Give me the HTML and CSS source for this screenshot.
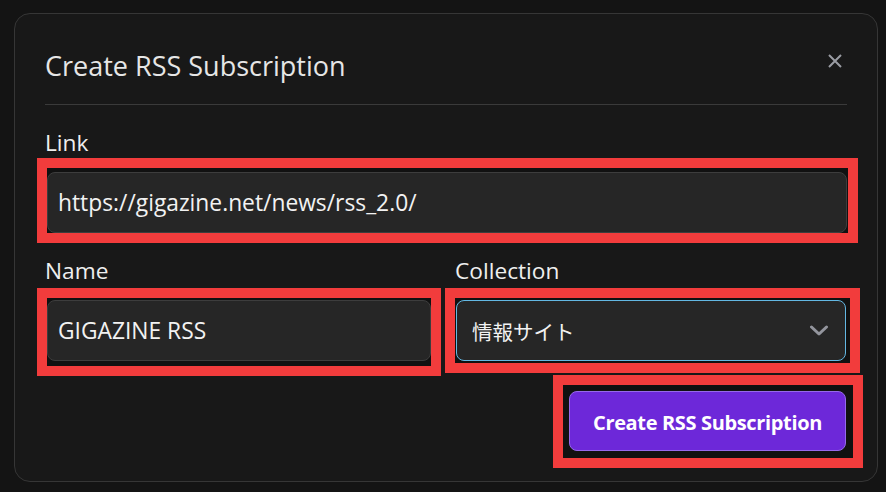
FILE: index.html
```html
<!DOCTYPE html>
<html lang="en">
<head>
<meta charset="utf-8">
<title>Create RSS Subscription</title>
<link rel="stylesheet" href="styles.css">
</head>
<body>
<div class="dialog">
  <div class="header">
    <h1 class="title">Create RSS Subscription</h1>
    <button class="close" aria-label="Close">
      <svg width="16" height="16" viewBox="0 0 16 16"><path d="M2 2 L14 14 M14 2 L2 14" stroke="#9a9ca3" stroke-width="2" fill="none"/></svg>
    </button>
  </div>

  <div class="field">
    <label class="label">Link</label>
    <div class="mark mark-link">
      <div class="input">https://gigazine.net/news/rss_2.0/</div>
    </div>
  </div>

  <div class="row">
    <div class="field">
      <label class="label">Name</label>
      <div class="mark mark-name">
        <div class="input">GIGAZINE RSS</div>
      </div>
    </div>
    <div class="field">
      <label class="label">Collection</label>
      <div class="mark mark-coll">
        <div class="input select">
          <span>情報サイト</span>
          <svg width="20" height="12" viewBox="0 0 20 12"><path d="M2.5 2 L10 9 L17.5 2" stroke="#93959d" stroke-width="3" fill="none" stroke-linecap="round" stroke-linejoin="round"/></svg>
        </div>
      </div>
    </div>
  </div>

  <div class="actions">
    <div class="mark mark-btn">
      <button class="primary">Create RSS Subscription</button>
    </div>
  </div>
</div>
</body>
</html>
```

FILE: styles.css
```css
* { box-sizing: border-box; }
html, body { margin: 0; padding: 0; }
body {
  background: #141414;
  width: 886px;
  height: 492px;
  overflow: hidden;
  font-family: "Open Sans", "Noto Sans", "Noto Sans CJK JP", sans-serif;
  color: #ededed;
}
.dialog {
  margin: 13px 0 0 14px;
  width: 864px;
  height: 469px;
  background: #181818;
  border: 1px solid #363636;
  border-radius: 16px;
  padding: 0 30px;
}
.header {
  height: 91px;
  border-bottom: 1px solid #3a3a3a;
  display: flex;
  align-items: center;
  justify-content: space-between;
  padding-top: 12px;
}
.title {
  margin: 0;
  font-size: 27px;
  font-weight: 400;
  color: #e6e6e6;
}
.close {
  background: none;
  border: 0;
  padding: 0;
  margin-right: 4px;
  margin-top: -8px;
  width: 16px;
  height: 16px;
  display: flex;
}
.field { display: flex; flex-direction: column; }
.label {
  font-size: 22.7px;
  line-height: 24px;
  color: #efefef;
  margin-bottom: 3px;
}
.dialog > .field { margin-top: 26px; }
.mark {
  border: 10px solid #f23c3c;
  background: #111111;
}
.mark-link {
  width: 821px;
  margin-left: -8px;
  padding: 4px 1px 0 0;
}
.input {
  height: 61px;
  background: #262626;
  border: 1px solid #3d3d3d;
  border-radius: 8px;
  padding: 0 10px;
  display: flex;
  align-items: center;
  font-size: 22.8px;
  color: #f2f2f2;
}
.row {
  display: grid;
  grid-template-columns: 410px 392px;
  margin-top: 16px;
}
.row .label { margin-bottom: 5px; }
.mark-name {
  width: 404px;
  margin-left: -8px;
  padding: 2px 0 5px 0;
}
.mark-coll {
  width: 415px;
  margin-left: -10px;
  padding: 2px 4px 2px 1px;
}
.select {
  border-color: #63b8e3;
  justify-content: space-between;
  padding: 0 16px 0 15px;
  font-family: "Noto Sans CJK JP", "Noto Sans", sans-serif;
  font-size: 20.5px;
}
.actions {
  display: flex;
  justify-content: flex-end;
  margin-top: -1px;
  margin-right: -16px;
}
.mark-btn {
  width: 310px;
  padding: 6px 7px 7px 6px;
}
.primary {
  width: 277px;
  height: 60px;
  background: #6d28d9;
  border: 1px solid #9669ea;
  border-radius: 8px;
  color: #ffffff;
  font-family: "Open Sans", "Noto Sans", sans-serif;
  font-size: 20px;
  font-weight: 700;
  letter-spacing: -0.35px;
  padding: 0;
  padding-top: 2px;
}
```
